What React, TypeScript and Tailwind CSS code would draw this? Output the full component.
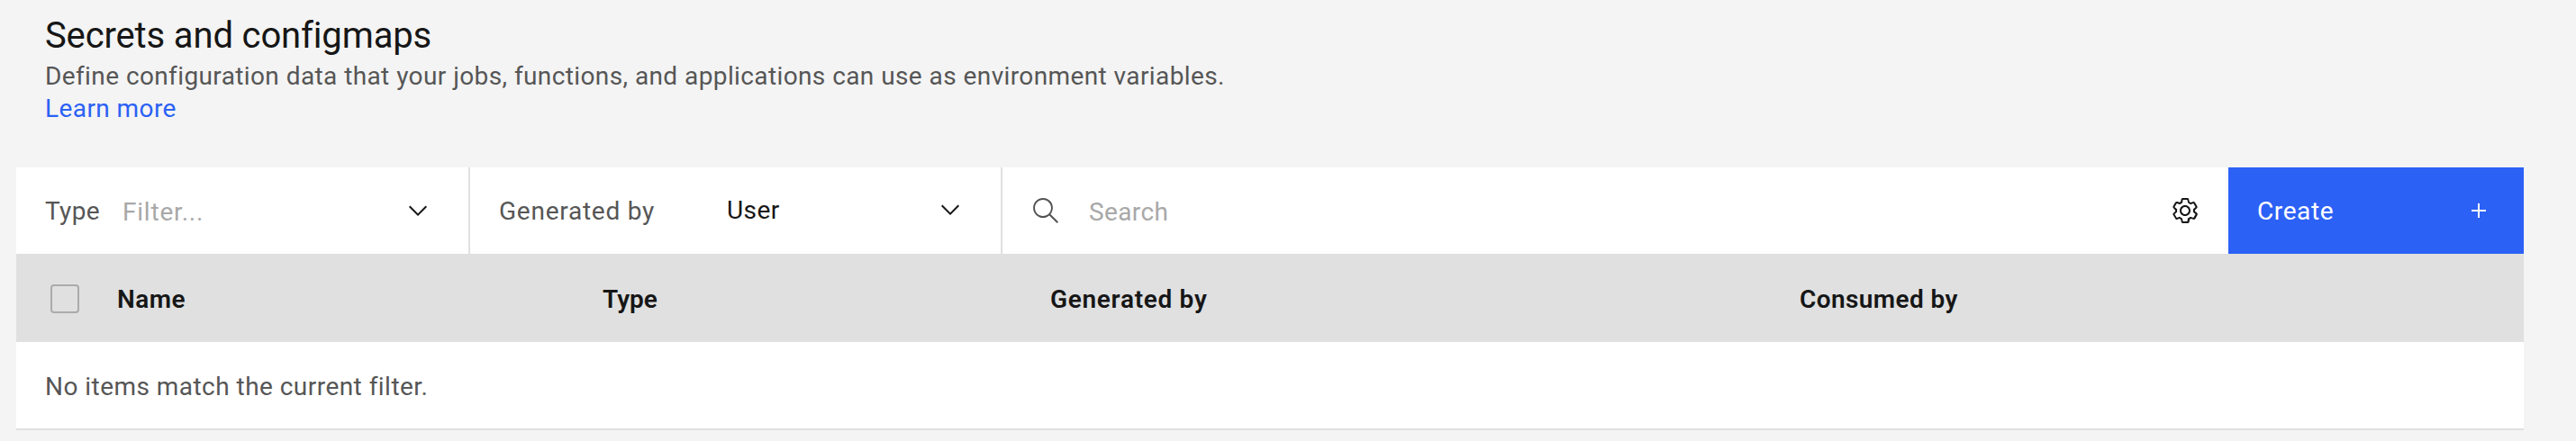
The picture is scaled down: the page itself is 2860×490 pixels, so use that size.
import React from "react";

function ChevronDown() {
  return (
    <svg className="size-8 shrink-0 fill-[#161616]" viewBox="0 0 16 16" aria-hidden="true">
      <path d="M8 11L3 6l.7-.7L8 9.6l4.3-4.3.7.7z" />
    </svg>
  );
}

function SearchIcon() {
  return (
    <svg className="size-8 shrink-0 fill-[#525252]" viewBox="0 0 16 16" aria-hidden="true">
      <path d="M15,14.3L10.7,10c1.9-2.3,1.6-5.8-0.7-7.7S4.2,0.7,2.3,3S0.7,8.8,3,10.7c2,1.7,5,1.7,7,0l4.3,4.3L15,14.3z M2,6.5C2,4,4,2,6.5,2S11,4,11,6.5S9,11,6.5,11S2,9,2,6.5z" />
    </svg>
  );
}

function SettingsIcon() {
  return (
    <svg className="size-8 shrink-0 fill-[#161616]" viewBox="0 0 16 16" aria-hidden="true">
      <path d="M13.5,8.4c0-0.1,0-0.3,0-0.4c0-0.1,0-0.3,0-0.4l1-0.8c0.4-0.3,0.4-0.9,0.2-1.3l-1.2-2C13.3,3.2,13,3,12.6,3c-0.1,0-0.2,0-0.3,0.1l-1.2,0.4c-0.2-0.1-0.4-0.3-0.7-0.4l-0.3-1.3C10.1,1.3,9.7,1,9.2,1H6.8c-0.5,0-0.9,0.3-1,0.8L5.6,3.1C5.3,3.2,5.1,3.3,4.9,3.4L3.7,3C3.6,3,3.5,3,3.4,3C3,3,2.7,3.2,2.5,3.5l-1.2,2C1.1,5.9,1.2,6.4,1.6,6.8l0.9,0.9c0,0.1,0,0.3,0,0.4c0,0.1,0,0.3,0,0.4L1.6,9.2c-0.4,0.3-0.5,0.9-0.2,1.3l1.2,2C2.7,12.8,3,13,3.4,13c0.1,0,0.2,0,0.3-0.1l1.2-0.4c0.2,0.1,0.4,0.3,0.7,0.4l0.3,1.3c0.1,0.5,0.5,0.8,1,0.8h2.4c0.5,0,0.9-0.3,1-0.8l0.3-1.3c0.2-0.1,0.4-0.2,0.7-0.4l1.2,0.4c0.1,0,0.2,0.1,0.3,0.1c0.4,0,0.7-0.2,0.9-0.5l1.1-2c0.2-0.4,0.2-0.9-0.2-1.3L13.5,8.4z M12.6,12l-1.7-0.6c-0.4,0.3-0.9,0.6-1.4,0.8L9.2,14H6.8l-0.4-1.8c-0.5-0.2-0.9-0.5-1.4-0.8L3.4,12l-1.2-2l1.4-1.2c-0.1-0.5-0.1-1.1,0-1.6L2.2,6l1.2-2l1.7,0.6C5.5,4.2,6,4,6.5,3.8L6.8,2h2.4l0.4,1.8c0.5,0.2,0.9,0.5,1.4,0.8L12.6,4l1.2,2l-1.4,1.2c0.1,0.5,0.1,1.1,0,1.6l1.4,1.2L12.6,12z" />
      <path d="M8,11c-1.7,0-3-1.3-3-3s1.3-3,3-3s3,1.3,3,3S9.7,11,8,11z M8,6C6.9,6,6,6.9,6,8s0.9,2,2,2s2-0.9,2-2S9.1,6,8,6z" />
    </svg>
  );
}

function PlusIcon() {
  return (
    <svg className="size-8 shrink-0 fill-white" viewBox="0 0 32 32" aria-hidden="true">
      <path d="M17 15V8h-2v7H8v2h7v7h2v-7h7v-2z" />
    </svg>
  );
}

export default function App() {
  return (
    <div className="h-[490px] w-[2860px] overflow-hidden bg-[#f4f4f4] font-[Roboto,sans-serif] text-[28px] leading-9 text-[#565656]">
      <header className="h-[186px] pl-[50px] pt-3">
        <h1 className="text-[40px] leading-[55px] tracking-[-0.14px] text-[#161616]">Secrets and configmaps</h1>
        <p className="whitespace-nowrap tracking-[0.38px] [word-spacing:0.2px]">
          Define configuration data that your jobs, functions, and applications can use as environment variables.
        </p>
        <a className="block w-fit tracking-[0.42px] text-[#2b61f5]">Learn more</a>
      </header>

      <main className="ml-[18px] w-[2784px]">
        <div className="flex h-24 bg-white">
          <div className="flex w-[504px] items-center border-r-2 border-[#e0e0e0] pl-8 pr-10">
            <span className="w-[86px] pt-0.5 tracking-[0.34px]">Type</span>
            <span className="grow pt-1 tracking-[0.79px] text-[#a8a8a8]">Filter...</span>
            <ChevronDown />
          </div>
          <div className="flex w-[591px] items-center border-r-2 border-[#e0e0e0] pl-8 pr-10">
            <span className="w-[253px] pt-0.5 tracking-[0.75px]">Generated by</span>
            <span className="grow tracking-[0.41px] text-[#161616]">User</span>
            <div className="flex pb-0.5">
              <ChevronDown />
            </div>
          </div>
          <div className="flex grow items-center px-8">
            <SearchIcon />
            <span className="ml-8 grow pt-1 tracking-[0.38px] text-[#a8a8a8]">Search</span>
            <SettingsIcon />
          </div>
          <button className="flex w-[328px] items-center justify-between bg-[#2c61f6] pl-8 pr-[34px] text-left text-white">
            <span className="pt-0.5 tracking-[0.6px]">Create</span>
            <PlusIcon />
          </button>
        </div>

        <div className="grid h-[98px] grid-cols-[112px_539px_497px_832px_1fr] items-center bg-[#e0e0e0] font-semibold text-[#161616]">
          <span className="ml-[38px] mt-[2px] size-8 rounded-[4px] border-2 border-[#ababab]" />
          <span className="pt-1 tracking-[0.44px]">Name</span>
          <span className="pt-1">Type</span>
          <span className="pt-1 tracking-[0.69px]">Generated by</span>
          <span className="pt-1 tracking-[0.4px]">Consumed by</span>
        </div>

        <div className="flex h-[98px] items-center border-b-2 border-[#e0e0e0] bg-white pl-8">
          <span className="pt-1 tracking-[0.46px]">No items match the current filter.</span>
        </div>
      </main>
    </div>
  );
}
